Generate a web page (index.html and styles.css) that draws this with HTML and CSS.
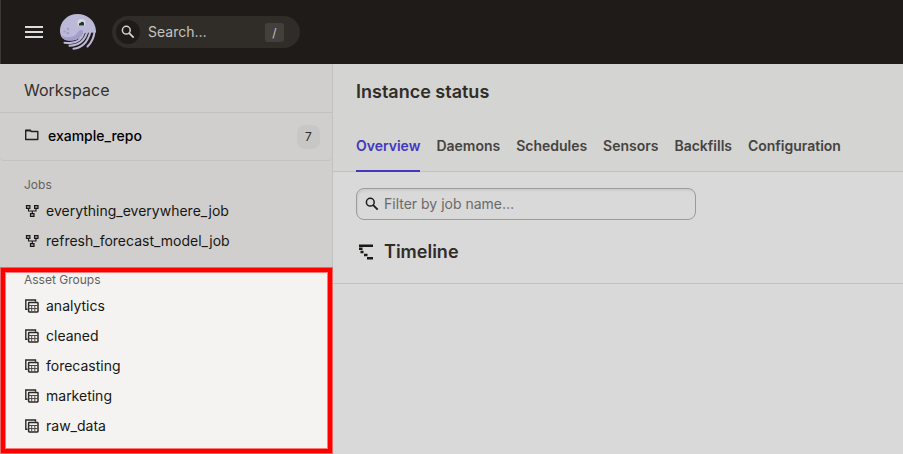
FILE: index.html
```html
<!DOCTYPE html>
<html lang="en">
<head>
<meta charset="utf-8">
<title>Instance status</title>
<link rel="stylesheet" href="styles.css">
</head>
<body>
<svg class="defs" width="0" height="0" aria-hidden="true">
  <symbol id="job" viewBox="0 0 16 16">
    <path d="M2.500 2.500h3.400v3H2.500zM10.600 2.500H14v3h-3.400zM6.500 10.500h3.500v3H6.500z" fill="#8c8b89" stroke="#171614" stroke-width="1.200"/>
    <path d="M4.500 6v2h7.500V6M8.300 8v2.500" fill="none" stroke="#171614" stroke-width="1.100"/>
  </symbol>
  <symbol id="group" viewBox="0 0 16 16">
    <path d="M3.500 11.300H1.800V2h9.700v1.700" fill="none" stroke="#2b2926" stroke-width="1.400"/>
    <rect x="4.600" y="4.600" width="9.400" height="9.300" rx=".6" fill="none" stroke="#2b2926" stroke-width="1.500"/>
    <path d="M4.500 7.500h9.400M4.500 10.600h9.400M7.700 7.500v6.200M10.800 7.500v6.200" stroke="#4a4845" stroke-width="1"/>
  </symbol>
  <symbol id="search" viewBox="0 0 16 16">
    <circle cx="6.300" cy="6.200" r="3.900" fill="none" stroke="currentColor" stroke-width="1.500"/>
    <path d="M9.200 9.100l4.500 4.500" stroke="currentColor" stroke-width="1.800"/>
  </symbol>
</svg>
<header class="topbar">
  <button class="menu" aria-label="Menu"><i></i><i></i><i></i></button>
  <svg class="logo" width="36" height="36" viewBox="0 0 36 36">
    <path d="M17.500 0C7.500 0 0 7.500 0 16.500c0 5.500 2.500 9.500 8 10C15 27 20.500 25 22.500 19.500L36 19C36.500 7.500 28 0 17.500 0z" fill="#bcb8d8"/>
    <path d="M1 21.500C6 24.500 13 23.500 16 20.500c2-2 2.500-4.500 5-4.500 2.300 0 2.800 2 1.500 4.500C19.500 26 12 27.500 6.500 26.300 3.800 25.500 2 24 1 21.500z" fill="#a49ccd"/>
    <path d="M22.500 19L21 24 12 29 12 36H36V18.500z" fill="#1e1b18"/>
    <path d="M4.500 28.700c8.500 1.400 16.500-1 19.500-10M9.500 31.700c8.500 0 14.500-4 17.500-13M13.500 34.700C22 34 27.500 28 30.200 18.500M27.500 32.500c3.500-3.500 6.500-8 7-15" fill="none" stroke="#bcb8d8" stroke-width="2.100" stroke-linecap="round"/>
    <circle cx="4.500" cy="17.500" r="1.100" fill="#a29acb"/><circle cx="8" cy="15" r="1.200" fill="#a29acb"/><circle cx="7.800" cy="19" r="1.300" fill="#a29acb"/>
    <circle cx="21.500" cy="9" r="4" fill="#d8d8d8"/><path d="M17 12h9v2h-9z" fill="#bcb8d8"/>
    <path d="M19 11.500V9.500l1.500-.7A2 2 0 0 1 24 9v2.500z" fill="#123b35"/>
  </svg>
  <div class="search">
    <span class="lens"><svg width="16" height="16"><use href="#search"/></svg></span>
    <span class="hint">Search…</span>
    <kbd>/</kbd>
  </div>
</header>
<div class="body">
  <aside class="sidebar">
    <div class="workspace">Workspace</div>
    <div class="repo">
      <svg width="16" height="16" viewBox="0 0 16 16"><path d="M1.700 3.300h4.600l1 1.200h6.500v8H1.700z" fill="none" stroke="#22201d" stroke-width="1.400" stroke-linejoin="round"/><path d="M1.700 3.700h5" stroke="#22201d" stroke-width="1.600"/></svg>
      <span>example_repo</span>
      <b class="count">7</b>
    </div>
    <section class="jobs">
      <h3>Jobs</h3>
      <ul>
        <li><svg width="16" height="16"><use href="#job"/></svg>everything_everywhere_job</li>
        <li><svg width="16" height="16"><use href="#job"/></svg>refresh_forecast_model_job</li>
      </ul>
    </section>
    <section class="groups">
      <h3>Asset Groups</h3>
      <ul>
        <li><svg width="16" height="16"><use href="#group"/></svg>analytics</li>
        <li><svg width="16" height="16"><use href="#group"/></svg>cleaned</li>
        <li><svg width="16" height="16"><use href="#group"/></svg>forecasting</li>
        <li><svg width="16" height="16"><use href="#group"/></svg>marketing</li>
        <li><svg width="16" height="16"><use href="#group"/></svg>raw_data</li>
      </ul>
    </section>
  </aside>
  <main>
    <div class="head">
      <h1>Instance status</h1>
      <nav><a class="on">Overview</a><a>Daemons</a><a>Schedules</a><a>Sensors</a><a>Backfills</a><a>Configuration</a></nav>
    </div>
    <div class="filter"><svg width="16" height="16"><use href="#search"/></svg>Filter by job name…</div>
    <div class="timeline">
      <svg width="20" height="20" viewBox="0 0 20 20"><path d="M3 2.500h14v2.500H3zM3 5.500h3.500v2.500H3zM4.500 8.800h3v2.500h-3zM8 11.800h3.500v2.400H8zM11 15h6v2.400h-6z" fill="#1c1a17"/></svg>
      <h2>Timeline</h2>
    </div>
  </main>
</div>
</body>
</html>
```
FILE: styles.css
```css
* { box-sizing: border-box; }
body {
  margin: 0;
  height: 454px;
  overflow: hidden;
  background: #d9d9d9;
  color: #171614;
  font: 14px/20px Inter, "Liberation Sans", sans-serif;
}
h1, h2, h3, ul { margin: 0; padding: 0; list-style: none; }
svg { flex: none; }
.defs { position: absolute; }
.topbar {
  display: flex;
  align-items: center;
  height: 64px;
  padding-left: 24px;
  background: #1e1b18;
  border-left: 1px solid #3b3937;
}
.menu {
  display: flex;
  flex-direction: column;
  gap: 3px;
  width: 18px;
  padding: 0;
  border: 0;
  background: none;
}
.menu i { height: 2px; background: #dcdcdb; }
.logo { margin: 0 16px 0 17px; }
.search {
  display: flex;
  align-items: center;
  width: 188px;
  height: 32px;
  padding: 0 16px 0 4px;
  border-radius: 16px;
  background: #302d29;
  color: #c5c4c1;
}
.lens {
  display: grid;
  place-items: center;
  width: 24px;
  height: 24px;
  border-radius: 50%;
  background: #1e1b18;
  color: #d5d4d2;
}
.hint { flex: 1; margin-left: 8px; }
kbd {
  width: 19px;
  height: 19px;
  border-radius: 3px;
  background: #42403d;
  font: 12px/19px Inter, sans-serif;
  text-align: center;
}
.body { display: flex; height: 390px; }
.sidebar {
  width: 333px;
  border-right: 1px solid #c2c1c0;
  background: #d0cfcd;
}
.workspace {
  height: 49px;
  padding: 16px 24px 0;
  border-bottom: 1px solid #c2c1bf;
  color: #33302d;
  font-size: 16px;
}
.repo {
  display: flex;
  align-items: center;
  gap: 8px;
  height: 48px;
  padding: 0 12px 1px 24px;
  border-bottom: 1px solid #c4c3c1;
  border-radius: 0 0 4px 4px;
  color: #000;
  font-weight: 500;
}
.repo svg { margin-top: -2px; }
.count {
  width: 23px;
  height: 24px;
  margin: 1px 0 0 auto;
  border-radius: 8px;
  background: #c8c7c5;
  color: #2c2a27;
  font: 12px/24px Inter, sans-serif;
  text-align: center;
}
h3 { color: #63615f; font-size: 12px; font-weight: 400; line-height: 16px; }
li { display: flex; align-items: center; gap: 6px; height: 30px; }
.jobs { height: 106px; padding: 16px 24px 0; }
.jobs h3 { margin-bottom: 3px; }
.groups {
  position: relative;
  height: 187px;
  padding: 5px 24px 0;
  background: #f4f3f1;
}
.groups::after {
  content: "";
  position: absolute;
  inset: 0 -1px 0 0;
  border: 1px solid #e96866;
  box-shadow: inset 0 0 0 4px #f00, inset 0 0 0 5px #fa7a79;
}
.groups h3 { margin-bottom: 3px; }
main { flex: 1; }
.head {
  height: 108px;
  padding: 16px 23px 0;
  border-bottom: 1px solid #c1c1bf;
  background: #d4d4d2;
}
h1, h2 { color: #302d29; font-size: 18px; font-weight: 600; line-height: 24px; }
nav { display: flex; gap: 16px; margin-top: 24px; letter-spacing: -.01px; }
nav a { height: 44px; padding-top: 8px; color: #454340; font-weight: 600; }
nav .on { color: #4337c0; border-bottom: 2px solid #4337c0; }
.filter {
  display: flex;
  align-items: center;
  gap: 4px;
  width: 340px;
  height: 32px;
  margin: 16px 23px;
  padding-left: 7px;
  border: 1px solid #9c9b99;
  border-radius: 8px;
  box-shadow: inset 1px 2px 2px #cdcdcd;
  color: #6c6a68;
}
.filter svg { color: #1c1a17; }
.timeline {
  display: flex;
  align-items: center;
  gap: 8px;
  height: 48px;
  padding: 0 23px 15px;
  border-bottom: 1px solid #c1c1c0;
}
```
